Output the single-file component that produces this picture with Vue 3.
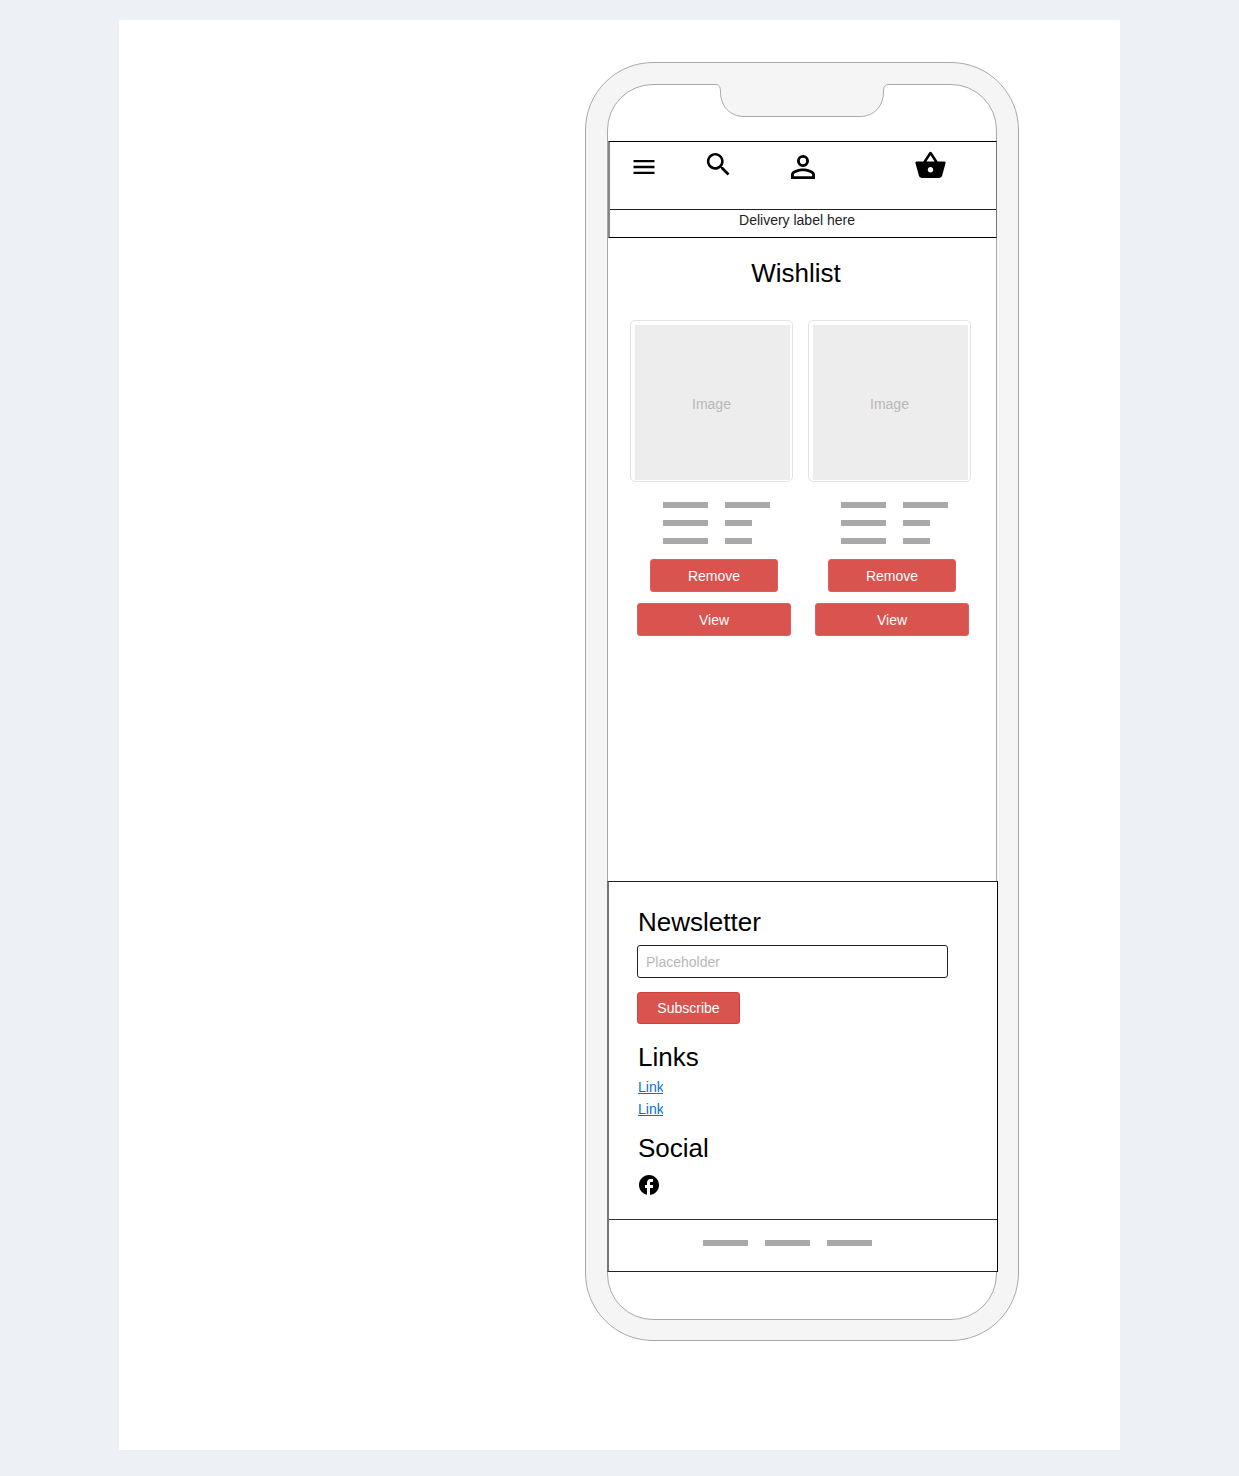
<script setup>
const products = [
  { id: 1, bars: ['long', 'long', 'long', 'short', 'long', 'short'] },
  { id: 2, bars: ['long', 'long', 'long', 'short', 'long', 'short'] },
]
const links = ['Link', 'Link']
</script>

<template>
  <main class="canvas">
    <div class="phone">
      <div class="screen">
        <svg class="notch" viewBox="0 0 176 33" width="176" height="33" aria-hidden="true">
          <path d="M1 0H175V0.500C171 0.500 169.500 2.500 169.500 8C169.500 22 160 32.500 146 32.500H30C16 32.500 6.500 22 6.500 8C6.500 2.500 5 0.500 1 0.500Z" fill="#f5f5f5" />
          <path d="M0 0.500H1C5 0.500 6.500 2.500 6.500 8C6.500 22 16 32.500 30 32.500H146C160 32.500 169.500 22 169.500 8C169.500 2.500 171 0.500 175 0.500H176" fill="none" stroke="#a9a9a9" />
        </svg>

        <header class="top">
          <nav class="toolbar" aria-label="Main">
            <button class="icon menu" type="button" aria-label="Menu">
              <svg viewBox="0 0 24 24" width="28" height="28"><path d="M3 6h18v2H3V6m0 5h18v2H3v-2m0 5h18v2H3v-2z" /></svg>
            </button>
            <button class="icon search" type="button" aria-label="Search">
              <svg viewBox="0 0 24 24" width="31" height="31"><path d="M15.500 14h-.79l-.28-.27C15.410 12.590 16 11.110 16 9.500 16 5.910 13.090 3 9.500 3S3 5.910 3 9.500 5.910 16 9.500 16c1.610 0 3.090-.59 4.230-1.570l.27.28v.79l5 4.990L20.490 19l-4.990-5zm-6 0C7.010 14 5 11.990 5 9.500S7.010 5 9.500 5 14 7.010 14 9.500 11.990 14 9.500 14z" /></svg>
            </button>
            <button class="icon account" type="button" aria-label="Account">
              <svg viewBox="0 0 24 24" width="36" height="36"><path d="M12 4a4 4 0 0 1 4 4 4 4 0 0 1-4 4 4 4 0 0 1-4-4 4 4 0 0 1 4-4m0 1.900A2.100 2.100 0 0 0 9.900 8a2.100 2.100 0 0 0 2.100 2.100A2.100 2.100 0 0 0 14.100 8 2.100 2.100 0 0 0 12 5.900M12 13c2.670 0 8 1.330 8 4v3H4v-3c0-2.670 5.330-4 8-4m0 1.900c-2.970 0-6.100 1.460-6.100 2.100v1.100h12.200V17c0-.64-3.130-2.100-6.100-2.100z" /></svg>
            </button>
            <button class="icon basket" type="button" aria-label="Basket">
              <svg viewBox="0 0 24 24" width="33" height="33"><path d="M17.210 9l-4.380-6.560c-.19-.28-.51-.42-.83-.42-.32 0-.64.14-.83.43L6.790 9H2c-.55 0-1 .45-1 1 0 .09.01.18.04.27l2.540 9.270c.23.84 1 1.460 1.920 1.460h13c.92 0 1.690-.62 1.930-1.460l2.540-9.270L23 10c0-.55-.45-1-1-1h-4.790zM9 9l3-4.400L15 9H9zm3 8c-1.100 0-2-.9-2-2s.9-2 2-2 2 .9 2 2-.9 2-2 2z" /></svg>
            </button>
          </nav>
          <p class="delivery">Delivery label here</p>
        </header>

        <h1 class="title">Wishlist</h1>

        <section class="products">
          <article v-for="product in products" :key="product.id" class="product">
            <div class="thumb"><div class="picture">Image</div></div>
            <div class="details">
              <span v-for="(bar, i) in product.bars" :key="i" class="bar" :class="bar"></span>
            </div>
            <div class="actions">
              <button class="btn remove" type="button">Remove</button>
              <button class="btn" type="button">View</button>
            </div>
          </article>
        </section>

        <footer class="footer">
          <div class="footer-main">
            <h2><label for="email">Newsletter</label></h2>
            <input id="email" class="field" type="text" placeholder="Placeholder" />
            <button class="btn subscribe" type="button">Subscribe</button>
            <h2 class="links-title">Links</h2>
            <ul class="links">
              <li v-for="(link, i) in links" :key="i"><a href="#">{{ link }}</a></li>
            </ul>
            <h2 class="social-title">Social</h2>
            <a class="social" href="#" aria-label="Facebook">
              <svg viewBox="0 0 24 24" width="24" height="24"><path d="M22 12c0-5.520-4.480-10-10-10S2 6.480 2 12c0 4.840 3.440 8.870 8 9.800V15H8v-3h2V9.500C10 7.570 11.570 6 13.500 6H16v3h-2c-.55 0-1 .45-1 1v2h3v3h-3v6.950c5.050-.5 9-4.760 9-9.950z" /></svg>
            </a>
          </div>
          <div class="legal">
            <span v-for="n in 3" :key="n" class="bar long"></span>
          </div>
        </footer>
      </div>
    </div>
  </main>
</template>

<style>
html {
  background: #edf1f6;
}
</style>

<style scoped>
.canvas {
  box-sizing: border-box;
  max-width: 1001px;
  margin: 20px auto 26px;
  padding: 42px 101px 109px 20px;
  background: #fff;
  color: #000;
  font-family: "Liberation Sans", Arial, sans-serif;
  font-size: 14px;
}
.phone {
  box-sizing: border-box;
  max-width: 434px;
  margin-left: auto;
  padding: 21px 21px 20px;
  border: 1px solid #a9a9a9;
  border-radius: 68px;
  background: #f5f5f5;
}
.screen {
  position: relative;
  padding: 56px 0 47px;
  border: 1px solid #a9a9a9;
  border-radius: 46px;
  background: #fff;
}
.notch {
  position: absolute;
  top: -1px;
  left: 50%;
  margin-left: -88px;
}
svg {
  display: block;
  fill: currentColor;
}
h1,
h2,
p,
ul {
  margin: 0;
  padding: 0;
  font-weight: 400;
}
h1,
h2 {
  font-size: 26px;
  line-height: 30px;
}
.top {
  margin-right: -1px;
  border: 1px solid #000;
  border-left: 2px solid #888;
  border-right-color: #777;
}
.toolbar {
  display: flex;
  align-items: flex-start;
  padding: 7px 49px 24px 20px;
  border-bottom: 1px solid #222;
}
.icon {
  padding: 0;
  border: 0;
  background: none;
  color: #000;
}
.menu {
  height: 36px;
}
.search {
  margin-left: 45px;
}
.account {
  margin-left: 51px;
}
.basket {
  margin-left: auto;
}
.delivery {
  padding: 0 12px 7px 0;
  color: #222;
  line-height: 20px;
  text-align: center;
}
.title {
  margin-top: 20px;
  padding-right: 12px;
  text-align: center;
}
.products {
  display: grid;
  grid-template-columns: 1fr 1fr;
  gap: 15px;
  padding: 32px 25px 245px 22px;
}
.thumb {
  padding: 4px 2px 1px 4px;
  border: 1px solid #e4e4e4;
  border-radius: 5px;
}
.picture {
  height: 155px;
  padding-right: 2px;
  background: #ededed;
  color: #b8b8b8;
  line-height: 158px;
  text-align: center;
}
.details {
  display: grid;
  grid-template-columns: 45px 45px;
  gap: 12px 17px;
  margin: 20px 0 15px 33px;
}
.bar {
  height: 6px;
  background: #a9a9a9;
}
.long {
  width: 45px;
}
.short {
  width: 27px;
}
.actions {
  display: flex;
  flex-direction: column;
  gap: 11px;
  margin: 0 2px 0 7px;
}
.btn {
  height: 33px;
  padding: 0;
  border: 1px solid #d9605c;
  border-radius: 3px;
  background: #d9534f;
  color: #fff;
  font: inherit;
}
.remove {
  margin: 0 13px;
}
.footer {
  margin: 0 -2px 0 -1px;
  border: 1px solid #222;
  border-left: 2px solid #777;
  border-right-color: #000;
  background: #fff;
}
.footer-main {
  padding: 25px 49px 22px 28px;
  border-bottom: 1px solid #333;
}
.footer-main h2 {
  padding-left: 1px;
}
.field {
  display: block;
  box-sizing: border-box;
  width: 100%;
  height: 33px;
  margin: 8px 0 14px;
  padding: 0 8px;
  border: 1px solid #222;
  border-radius: 3px;
  background: #fff;
  font: inherit;
}
.field::placeholder {
  color: #b8b8b8;
  opacity: 1;
}
.subscribe {
  display: block;
  width: 103px;
  height: 32px;
  border-color: #d43f3a;
}
.links-title {
  margin-top: 18px;
}
.links {
  margin-top: 4px;
  padding-left: 1px;
  list-style: none;
  line-height: 22px;
}
.links li {
  width: 25px;
  overflow: hidden;
}
.links a {
  color: #0070e0;
}
.social-title {
  margin-top: 13px;
}
.social {
  display: block;
  width: 24px;
  margin-top: 10px;
  color: #000;
}
.legal {
  display: flex;
  justify-content: center;
  gap: 17px;
  padding: 20px 32px 25px 0;
}
</style>
